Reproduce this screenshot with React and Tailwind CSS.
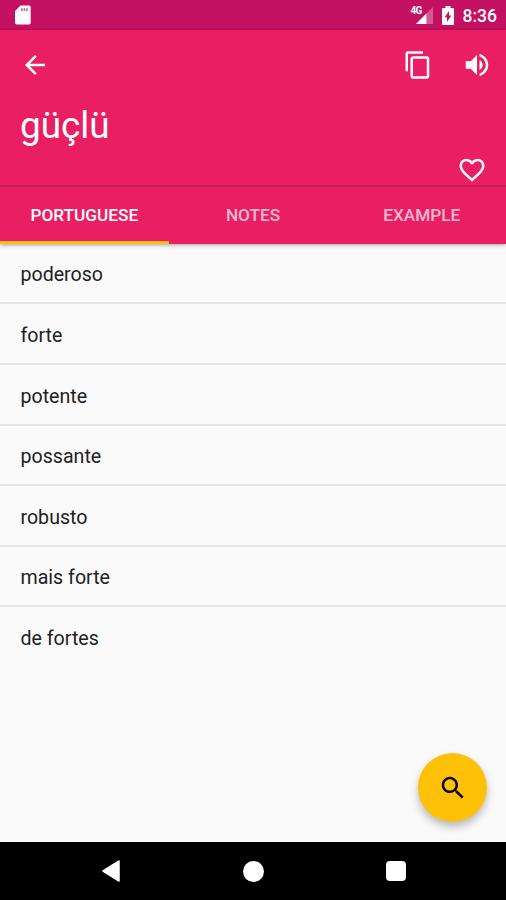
const translations = [
  { text: "poderoso", row: "h-[60px]" },
  { text: "forte", row: "h-[61px]" },
  { text: "potente", row: "h-[61px]" },
  { text: "possante", row: "h-[60px]" },
  { text: "robusto", row: "h-[61px]" },
  { text: "mais forte", row: "h-[60px]" },
  { text: "de fortes", row: "h-[59px]" },
];

function Icon({ d, className, label }) {
  return (
    <svg viewBox="0 0 24 24" fill="currentColor" className={className} aria-label={label}>
      <path d={d} />
    </svg>
  );
}

const paths = {
  back: "M20 11H7.83l5.59-5.59L12 4l-8 8 8 8 1.41-1.41L7.83 13H20v-2z",
  copy: "M16 1H4c-1.1 0-2 .9-2 2v14h2V3h12V1zm3 4H8c-1.1 0-2 .9-2 2v14c0 1.1.9 2 2 2h11c1.1 0 2-.9 2-2V7c0-1.1-.9-2-2-2zm0 16H8V7h11v14z",
  volume: "M3 9v6h4l5 5V4L7 9H3zm13.5 3c0-1.77-1.02-3.29-2.5-4.03v8.05c1.48-.73 2.5-2.25 2.5-4.02zM14 3.23v2.06c2.89.86 5 3.54 5 6.71s-2.11 5.85-5 6.71v2.06c4.01-.91 7-4.49 7-8.77s-2.99-7.86-7-8.77z",
  heart: "M16.5 3c-1.74 0-3.41.81-4.5 2.09C10.91 3.81 9.24 3 7.5 3 4.42 3 2 5.42 2 8.5c0 3.78 3.4 6.86 8.55 11.54L12 21.35l1.45-1.32C18.6 15.36 22 12.28 22 8.5 22 5.42 19.58 3 16.5 3zm-4.4 15.55l-.1.1-.1-.1C7.14 14.24 4 11.39 4 8.5 4 6.5 5.5 5 7.5 5c1.54 0 3.04.99 3.57 2.36h1.87C13.46 5.99 14.96 5 16.5 5c2 0 3.5 1.5 3.5 3.5 0 2.89-3.14 5.74-7.9 10.05z",
  search: "M15.5 14h-.79l-.28-.27C15.41 12.59 16 11.11 16 9.5 16 5.91 13.09 3 9.5 3S3 5.91 3 9.5 5.91 16 9.5 16c1.61 0 3.09-.59 4.23-1.57l.27.28v.79l5 4.99L20.49 19l-4.99-5zm-6 0C7.01 14 5 11.99 5 9.5S7.01 5 9.5 5 14 7.01 14 9.5 11.99 14 9.5 14z",
};

function StatusBar() {
  return (
    <div className="flex h-[30px] items-center bg-[#c41162] pl-[15px] pr-[9px] text-white">
      <svg viewBox="0 0 16 20" className="h-5 w-4" aria-label="SD card">
        <path d="M5.5 0.5H14a1.7 1.7 0 0 1 1.7 1.7v15.6a1.7 1.7 0 0 1-1.7 1.7H1.7A1.7 1.7 0 0 1 0 17.800V6z" fill="#fff" />
        <path d="M6 3.300h1.600v2.600H6zM8.600 3.300h1.600v2.600H8.600zM11.200 3.300h1.600v2.600h-1.600z" fill="#c41162" opacity=".7" />
      </svg>
      <div className="ml-auto flex items-center">
        <span className="mb-[9px] mr-[-6px] text-[10px] font-bold leading-none tracking-[-0.8px]">4G</span>
        <svg viewBox="0 0 18 18" className="mr-[9px] mt-px h-[17px] w-[17px]" aria-label="Signal">
          <path d="M18 0v18H0z" fill="#fff" opacity=".3" />
          <path d="M11 7v11H0z" fill="#fff" />
        </svg>
        <svg viewBox="0 0 12 19" className="mr-[9px] h-[19px] w-3" aria-label="Battery charging">
          <path d="M3.500 0h5v2H11a1 1 0 0 1 1 1v15a1 1 0 0 1-1 1H1a1 1 0 0 1-1-1V3a1 1 0 0 1 1-1h2.500z" fill="#fff" />
          <path d="M7 5v4.500h2.300L5 16v-4.800H2.700z" fill="#c41162" />
        </svg>
        <span className="pt-[3px] text-[17.5px] font-medium leading-none">8:36</span>
      </div>
    </div>
  );
}

export default function App() {
  return (
    <div className="flex h-[900px] w-[506px] flex-col overflow-hidden bg-[#fafafa] font-[Roboto,sans-serif]">
      <StatusBar />
      <header className="z-10 flex h-[214px] shrink-0 flex-col bg-[#e91e63] text-white shadow-[0_1px_4px_rgba(0,0,0,0.35)]">
        <div className="flex h-[69px] items-center pl-5 pr-[14px]">
          <Icon d={paths.back} label="Back" className="h-[30px] w-[30px]" />
          <Icon d={paths.copy} label="Copy" className="ml-auto h-[30px] w-[30px]" />
          <Icon d={paths.volume} label="Speak" className="ml-[29px] h-[30px] w-[30px]" />
        </div>
        <h1 className="h-[54px] pl-5 text-[36.9px] font-normal leading-[53px]">güçlü</h1>
        <div className="flex h-[32px] justify-end pr-[19px] pt-[2px]">
          <Icon d={paths.heart} label="Favorite" className="h-[30px] w-[30px]" />
        </div>
        <nav className="grid h-[59px] grid-cols-3 border-t-2 border-[#c91b59] text-[17.2px] font-medium">
          <div className="flex items-center justify-center border-b-[3px] border-[#ffc107] pt-[4px]">PORTUGUESE</div>
          <div className="flex items-center justify-center border-b-[3px] border-transparent pt-[4px] text-white/70">NOTES</div>
          <div className="flex items-center justify-center border-b-[3px] border-transparent pt-[4px] text-white/70">EXAMPLE</div>
        </nav>
      </header>
      <main className="relative flex-1">
        <ul className="text-[19.6px] text-[#212121]">
          {translations.map(({ text, row }, i) => (
            <li
              key={text}
              className={`flex items-center pl-[20.5px] pt-[4px] ${row} ${
                i < translations.length - 1 ? "border-b-2 border-[#e4e4e4]" : ""
              }`}
            >
              {text}
            </li>
          ))}
        </ul>
        <button
          aria-label="Search"
          className="absolute bottom-5 right-[19px] flex h-[69px] w-[69px] items-center justify-center rounded-full bg-[#ffc107] text-black shadow-[0_5px_8px_rgba(0,0,0,0.26)]"
        >
          <Icon d={paths.search} className="h-[30px] w-[30px]" />
        </button>
      </main>
      <footer className="flex h-[58px] shrink-0 items-center bg-black">
        <svg viewBox="0 0 18 22" className="ml-[102px] h-[22px] w-[18px]" aria-label="Back">
          <path d="M17 1v20L1 11z" fill="#fff" stroke="#fff" strokeWidth="1.500" strokeLinejoin="round" />
        </svg>
        <div className="ml-[123px] h-[21px] w-[21px] rounded-full bg-white" />
        <div className="ml-[122px] h-5 w-5 rounded-sm bg-white" />
      </footer>
    </div>
  );
}
